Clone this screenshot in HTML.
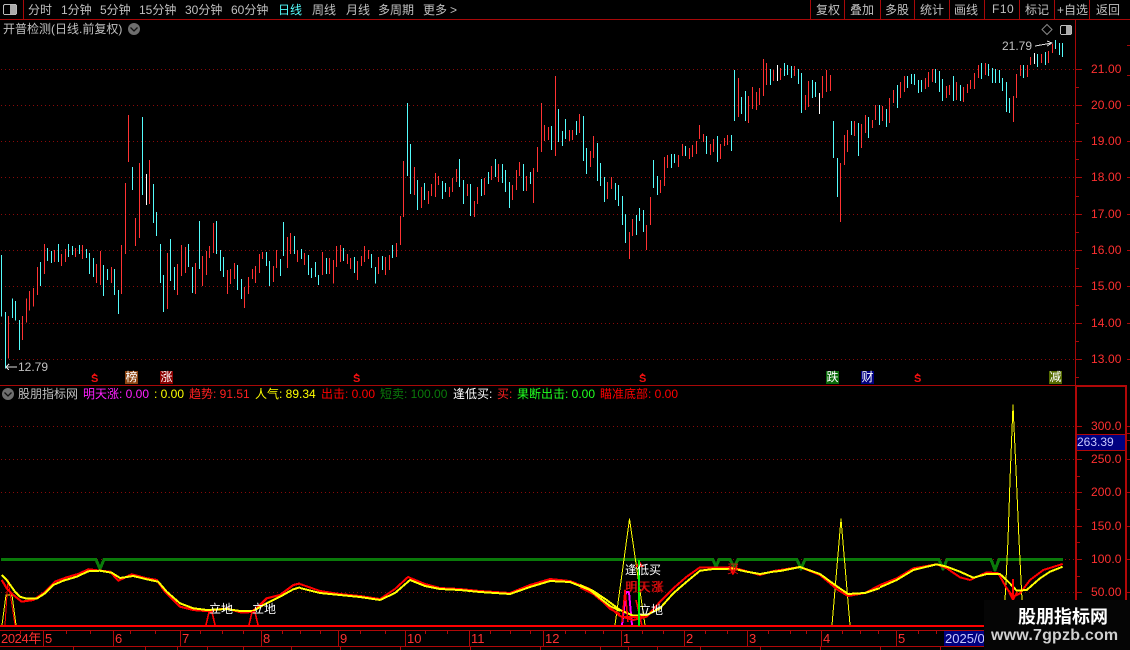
<!DOCTYPE html>
<html><head><meta charset="utf-8"><style>
html,body{margin:0;padding:0;background:#000;width:1130px;height:650px;overflow:hidden}
#p{position:relative;width:1130px;height:650px;background:#000;overflow:hidden;font:12px/14px "Liberation Sans","WenQuanYi Zen Hei","Noto Sans CJK SC",sans-serif;color:#c0c0c0}
.t{position:absolute;white-space:pre;line-height:14px;height:14px}
.y{color:#ff3030;letter-spacing:.1px}
.m{color:#ff3030;font-size:13px}
.s{color:#f01010;font-weight:bold;font-size:11px}
svg{position:absolute;left:0;top:0}
.bx{position:absolute;width:13px;height:13px;color:#fff;font-size:12px;line-height:13px;text-align:center;top:371px}
</style></head><body><div id="p">
<svg width="1130" height="650" shape-rendering="crispEdges" fill="none">
<g stroke="#8a0a0a" stroke-dasharray="1 3">
<path d="M1 69.5H1075M1 105.5H1075M1 141.5H1075M1 177.5H1075M1 214.5H1075M1 250.5H1075M1 286.5H1075M1 323.5H1075M1 359.5H1075M1 426.5H1075M1 459.5H1075M1 492.5H1075M1 526.5H1075M1 559.5H1075M1 592.5H1075"/>
</g>
<g stroke-width="3" transform="translate(.17,100) scale(.33333)">
<path stroke="#54fcfc" d="M4 465V650M16 636V805M37 595V654M46 603V662M58 660V750M121 486V558M142 444V483M154 453V489M175 432V486M205 432V471M217 438V465M238 435V462M259 447V474M268 459V522M280 474V531M310 495V588M322 507V540M343 507V585M355 570V642M397 201V270M427 51V285M460 252V369M469 336V408M481 432V549M490 525V636M511 417V543M523 501V570M565 432V501M577 501V579M598 363V507M649 363V462M661 450V513M670 471V531M712 495V570M724 537V597M799 456V498M808 483V558M841 477V528M850 366V468M883 408V462"/>
<path stroke="#ff3232" d="M25 648V775M67 648V720M79 595V668M88 573V632M100 564V620M112 501V585M133 432V522M163 450V486M184 462V498M196 447V486M226 444V471M247 435V477M289 492V549M301 453V555M334 501V549M364 435V582M376 249V462M385 45V186M406 354V438M418 189V414M448 180V312M502 459V627M532 492V585M544 435V528M556 441V519M586 489V582M607 468V558M619 453V525M628 438V474M640 369V459M682 510V582M691 507V552M703 489V537M733 561V624M745 531V582M757 507V537M766 498V549M778 462V519M787 456V477M820 498V546M829 450V504M862 411V504M871 399V462M892 450V486"/>
<path stroke="#fff" d="M439 222V315"/>
</g>
<g stroke-width="3" transform="translate(300.17,80) scale(.33333)">
<path stroke="#54fcfc" d="M4 507V537M25 525V585M34 564V594M46 546V591M55 585V615M79 534V582M130 504V543M163 531V579M214 522V564M226 561V610M247 528V570M277 495V534M322 69V288M331 192V342M352 300V390M373 309V360M427 303V357M436 309V336M478 237V321M490 300V372M511 312V408M544 297V348M565 276V312M586 237V291M607 252V309M616 270V336M628 306V384M670 252V333M691 276V312M754 138V210M775 87V186M787 153V198M796 117V177M829 123V165M850 108V243M859 204V282M892 189V303"/>
<path stroke="#ff3232" d="M13 519V555M67 516V585M88 534V582M100 540V610M109 498V561M121 495V546M142 522V552M151 534V567M172 543V600M184 528V558M193 498V546M205 510V537M235 531V582M256 531V585M268 525V570M289 489V531M301 408V495M310 243V411M343 261V345M364 321V384M385 333V372M394 312V348M406 279V351M415 288V315M448 321V351M457 294V336M469 267V306M502 312V348M523 363V411M532 321V372M553 294V345M574 258V300M595 252V306M637 315V360M649 270V330M658 246V288M679 288V333M700 264V369M712 201V276M724 69V216M733 135V183M745 141V180M766 -12V228M808 150V183M817 150V180M838 102V159M871 213V261M880 168V234"/>
</g>
<g stroke-width="3" transform="translate(600.17,50) scale(.33333)">
<path stroke="#54fcfc" d="M1 339V408M13 381V456M46 399V450M55 405V468M67 438V525M76 492V579M109 495V555M118 474V513M130 480V546M160 330V414M172 378V435M214 312V354M223 312V339M256 288V318M319 258V312M352 258V336M394 255V303M403 60V213M424 141V192M436 123V213M511 57V105M553 39V78M562 45V75M574 48V84M595 57V102M604 69V189M637 90V144M646 96V141M700 213V324M712 324V441M754 213V255M775 219V318M805 201V264M838 165V225M859 177V231M892 105V174"/>
<path stroke="#ff3232" d="M22 396V447M34 381V417M88 546V627M97 507V558M139 525V600M151 441V525M181 390V429M193 321V408M202 315V354M235 315V351M247 282V318M268 294V327M277 285V321M289 273V312M298 225V267M310 252V276M331 282V315M340 267V306M361 282V327M373 264V288M382 255V285M415 84V201M445 138V219M457 111V177M469 126V180M478 114V165M490 27V138M499 39V105M520 60V93M541 54V90M583 48V78M616 135V180M625 93V171M667 78V144M679 60V126M691 75V123M721 339V516M733 255V345M742 240V306M763 213V258M784 222V294M796 195V249M817 210V234M826 165V210M847 168V213M868 144V219M880 120V159"/>
<path stroke="#fff" d="M532 45V93M658 129V192"/>
</g>
<g stroke-width="3" transform="translate(860.17,30) scale(.33333)">
<path stroke="#54fcfc" d="M142 138V174M154 132V162M163 132V165M175 150V189M184 150V186M226 117V159M238 123V186M247 147V213M280 138V213M301 165V213M364 99V147M385 102V138M397 114V159M406 117V159M418 120V159M427 144V183M439 156V246M448 204V249M490 105V144M532 72V111M556 66V105M586 30V57M598 39V75M607 39V81"/>
<path stroke="#ff3232" d="M121 156V204M133 138V186M196 144V177M205 126V171M217 117V156M259 168V204M268 165V195M289 156V210M310 171V216M322 162V189M331 150V177M343 129V177M355 105V144M376 99V135M460 198V276M469 132V204M481 105V138M502 105V141M511 81V105M544 72V99M565 63V99M577 42V69"/>
<path stroke="#fff" d="M523 69V102"/>
</g>
<!-- frame -->
<g stroke="#a80808">
<path d="M0 19.5H1130M23.5 0V19M810.5 0V19M844.5 0V19M880.5 0V19M914.5 0V19M949.5 0V19M984.5 0V19M1019.5 0V19M1054.5 0V19M1089.5 0V19"/>
<path d="M0 385.5H1075"/>
<path d="M1075.5 19V385"/>
<path d="M1076 69.5H1082M1076 87.5H1079M1076 105.5H1082M1076 123.5H1079M1076 141.5H1082M1076 159.5H1079M1076 177.5H1082M1076 196.5H1079M1076 214.5H1082M1076 232.5H1079M1076 250.5H1082M1076 268.5H1079M1076 286.5H1082M1076 305.5H1079M1076 323.5H1082M1076 341.5H1079M1076 359.5H1082M1076 377.5H1079"/>
<path d="M1127 45.5H1130M1127 75.5H1130M1127 105.5H1130M1127 141.5H1130M1127 177.5H1130M1127 214.5H1130M1127 250.5H1130M1127 286.5H1130M1127 323.5H1130M1127 359.5H1130M1127 426.5H1130M1127 433.5H1130M1127 440.5H1130M1127 459.5H1130M1127 492.5H1130M1127 526.5H1130M1127 559.5H1130M1127 592.5H1130"/>
<path d="M1077 426.5H1082M1077 443.5H1080M1077 459.5H1082M1077 476.5H1080M1077 492.5H1082M1077 509.5H1080M1077 526.5H1082M1077 542.5H1080M1077 559.5H1082M1077 576.5H1080M1077 592.5H1082M1077 609.5H1080"/>
</g>
<rect x="1075" y="385" width="51" height="2" fill="#b00808"/>
<rect x="1075" y="385" width="2" height="265" fill="#b00808"/>
<rect x="1125" y="385" width="2" height="265" fill="#b00808"/>
<rect x="1077" y="435" width="48" height="15" fill="#000080"/>
<path d="M1077 434.5H1125M1077 450.5H1125" stroke="#b00808"/>
<!-- time axis -->
<g stroke="#b00808">
<path d="M0 630.5H1075M0 646.5H1075M43.5 630V646M113.5 630V646M180.5 630V646M261.5 630V646M338.5 630V646M405.5 630V646M469.5 630V646M543.5 630V646M621.5 630V646M684.5 630V646M747.5 630V646M821.5 630V646M896.5 630V646"/>
<path d="M20.5 630V634M66.5 630V634M90.5 630V634M130.5 630V634M155.5 630V634M200.5 630V634M222.5 630V634M243.5 630V634M282.5 630V634M300.5 630V634M320.5 630V634M360.5 630V634M385.5 630V634M425.5 630V634M447.5 630V634M490.5 630V634M510.5 630V634M530.5 630V634M565.5 630V634M585.5 630V634M603.5 630V634M642.5 630V634M663.5 630V634M705.5 630V634M727.5 630V634M768.5 630V634M790.5 630V634M806.5 630V634M842.5 630V634M860.5 630V634M878.5 630V634M918.5 630V634M936.5 630V634"/>
<path d="M73.5 647V650M145.5 647V650M177.5 647V650M207.5 647V650M243.5 647V650M291.5 647V650M340.5 647V650M400.5 647V650M470.5 647V650M540.5 647V650M600.5 647V650M628.5 647V650M657.5 647V650M700.5 647V650M760.5 647V650M820.5 647V650M880.5 647V650M940.5 647V650"/>
</g>
<rect x="944" y="631" width="41" height="15" fill="#000080"/>
<!-- indicators -->
<g fill="none" stroke-linejoin="round">
<path stroke="#0a7a0a" stroke-width="3" d="M1 559.5H96L100 569L104 559.5H713L716 567L719 559.5H730L734 567L738 559.5H797L801 569L805 559.5H939L943 569L947 559.5H991L995 570L999 559.5H1063"/>
<g stroke="#ffff00" stroke-width="1">
<path d="M2 625L6 595H12L16 625"/>
<path d="M615 625L629.5 519L645 625"/>
<path d="M832 625L841 519L850 625"/>
<path d="M1005 600L1008 540L1010 480L1013 405L1016 470L1019 540L1022 600"/>
</g>
<path stroke="#ff0000" stroke-width="1" d="M5 625L8 580L15 625"/>
<path stroke="#ff00ff" stroke-width="2" d="M622 625L626 592H629L632 625"/>
<g stroke="#ff0000" transform="translate(0,550) scale(.33333)">
<path stroke-width="6.500" d="M5 90L20 115L40 135L65 155L100 150L130 130L165 95L200 82L235 72L265 58L300 62L330 65L355 92L395 73L440 85L470 90L495 125L540 170L580 180L620 183L680 175L725 188L755 186L780 165L800 145L840 135L880 105L900 100"/>
</g>
<path stroke="#ff0000" stroke-width="2" d="M300 584L320 591L340 594L360 596L380 599L395 589L408 577L425 584L440 588L460 589L480 591L510 593L530 585L550 579L570 581L590 589L610 609L620 614"/>
<path stroke="#ff0000" stroke-width="2" d="M580 587.3L593.3 594L606.7 605L620 616L633.3 620L646.7 616.7L660 601.7L673.3 588.3L686.7 576.7L700 567.3L713.3 567.3L726.7 567.3L740 569.3L760 575L773.3 571L780 570L800 567L820 575L838 590L848 596L865 593L880 585"/>
<path stroke="#ff0000" stroke-width="2" d="M880 585L896.7 578.3L913.3 568.3L936.7 564.3L946.7 568.3L960 577.3L970 580L986.7 572.3L998.3 573.3L1006.7 588.3L1013.3 596.7L1020 593.3L1030 580L1043.3 570L1062.7 564"/>
<g stroke="#ffff00" stroke-width="2">
<path d="M1.7 575L6.7 580L15 591.7L20 596.7L26.7 598.7L36.7 598.7L45 593.3L53.3 585L63.3 580.7L76.7 576.7L88.3 571.3L100 570.7L111.7 572.7L120 578L133.3 576L146.7 579.3L158.3 581.7L166.7 591.7L180 603.3L193.3 608.3L206.7 610L226.7 609L240 611L253.3 611L263.3 605L280 596.7L293.3 589.3L300 587.3"/>
<path d="M300 588L320 593L340 595L360 597L380 600L395 593L410 580L425 586L440 589L460 590L480 592L510 594L530 587L550 581L570 582L590 590L610 606L620 611"/>
<path d="M580 585L593.3 591L606.7 600L620 610L633.3 615.7L646.7 615L660 608.3L673.3 593.3L686.7 581.7L700 570.7L713.3 569L733.3 568.7L746.7 571.7L760 574L773.3 571.7L780 571L800 567L820 574L835 585L848 594L865 593L880 588"/>
<path d="M880 587.3L896.7 580L913.3 570L936.7 564.3L946.7 566.7L960 571.7L973.3 577.7L986.7 574L1000 574L1008.3 581.7L1016.7 590.7L1026.7 590L1040 578.3L1050 571.7L1062.7 566.7"/>
</g>
<g stroke="#ff0000" stroke-width="1.600">
<path d="M206 625L209 612H212L215 625"/>
<path d="M249 625L252 612H255L258 625"/>
<path d="M622 622L625 590L628 622M622 617H644M636 600L642 626"/>
<path d="M1013 579V600M1009 592L1013 600L1017 592"/>
<path d="M729 566L733 574L737 566"/>
</g>
<path d="M635 567H644L639.500 561Z" fill="#ff0000"/>
<g stroke="#ddd" stroke-width="1" fill="none">
<path d="M1035 46L1052 43L1047 41M1052 43L1047 46"/>
<path d="M6 367H17M9 364L6 367L9 370"/>
</g>
<rect x="5" y="350" width="1" height="15" fill="#54fcfc"/>
</g>
<rect x="0" y="625" width="1075" height="2" fill="#ff0000"/>
<rect x="638" y="560" width="2" height="66" fill="#00f000"/>
<!-- icons -->
<rect x="3.500" y="4.500" width="13" height="10" rx="1.500" fill="none" stroke="#bbb"/>
<rect x="10" y="5" width="6" height="9" fill="#aaa"/>
<rect x="1060.500" y="25.500" width="11" height="9" rx="1.500" fill="none" stroke="#bbb"/>
<rect x="1066" y="26" width="5" height="8" fill="#aaa"/>
<path d="M1047 24.500L1052 29.500L1047 34.500L1042 29.500Z" fill="none" stroke="#888" shape-rendering="auto"/>
<g shape-rendering="auto">
<circle cx="134" cy="29" r="6" fill="#6e6e6e"/><path d="M130.500 27.500L134 31L137.500 27.500" stroke="#111" stroke-width="1.300" fill="none"/>
<circle cx="8" cy="394" r="6" fill="#6e6e6e"/><path d="M4.500 392.500L8 396L11.500 392.500" stroke="#111" stroke-width="1.300" fill="none"/>
<path d="M92 376H97L94.500 373Z" fill="#f01010"/><path d="M354 376H359L356.500 373Z" fill="#f01010"/><path d="M640 376H645L642.500 373Z" fill="#f01010"/><path d="M915 376H920L917.500 373Z" fill="#f01010"/>
</g>
</svg>
<span class="t" style="left:28px;top:3px">分时</span><span class="t" style="left:61px;top:3px">1分钟</span><span class="t" style="left:100px;top:3px">5分钟</span><span class="t" style="left:139px;top:3px">15分钟</span><span class="t" style="left:185px;top:3px">30分钟</span><span class="t" style="left:231px;top:3px">60分钟</span><span class="t" style="left:278px;top:3px;color:#54fcfc">日线</span><span class="t" style="left:312px;top:3px">周线</span><span class="t" style="left:346px;top:3px">月线</span><span class="t" style="left:378px;top:3px">多周期</span><span class="t" style="left:423px;top:3px">更多</span><span class="t" style="left:450px;top:3px">&gt;</span>
<span class="t" style="left:816px;top:3px">复权</span><span class="t" style="left:850px;top:3px">叠加</span><span class="t" style="left:885px;top:3px">多股</span><span class="t" style="left:920px;top:3px">统计</span><span class="t" style="left:954px;top:3px">画线</span><span class="t" style="left:992px;top:2px;letter-spacing:.5px">F10</span><span class="t" style="left:1025px;top:3px">标记</span><span class="t" style="left:1057px;top:3px">+自选</span><span class="t" style="left:1096px;top:3px">返回</span>
<span class="t" style="left:3px;top:22px">开普检测(日线.前复权)</span>
<span class="t" style="left:1002px;top:39px">21.79</span><span class="t" style="left:18px;top:360px">12.79</span>
<span class="t y" style="left:1091px;top:62px">21.00</span><span class="t y" style="left:1091px;top:98px">20.00</span><span class="t y" style="left:1091px;top:134px">19.00</span><span class="t y" style="left:1091px;top:170px">18.00</span><span class="t y" style="left:1091px;top:207px">17.00</span><span class="t y" style="left:1091px;top:243px">16.00</span><span class="t y" style="left:1091px;top:279px">15.00</span><span class="t y" style="left:1091px;top:316px">14.00</span><span class="t y" style="left:1091px;top:352px">13.00</span>
<span class="t y" style="left:1091px;top:419px">300.0</span><span class="t y" style="left:1091px;top:452px">250.0</span><span class="t y" style="left:1091px;top:485px">200.0</span><span class="t y" style="left:1091px;top:519px">150.0</span><span class="t y" style="left:1091px;top:552px">100.0</span><span class="t y" style="left:1091px;top:585px">50.00</span>
<span class="t" style="left:1077px;top:435px;color:#c8c8ff">263.39</span>
<span class="t s" style="left:91px;top:372px">S</span><span class="t s" style="left:353px;top:372px">S</span><span class="t s" style="left:639px;top:372px">S</span><span class="t s" style="left:914px;top:372px">S</span>
<span class="bx" style="left:125px;background:#8b4513">榜</span><span class="bx" style="left:160px;background:#8b0000">涨</span><span class="bx" style="left:826px;background:#0a6a0a">跌</span><span class="bx" style="left:861px;background:#000080">财</span><span class="bx" style="left:1049px;background:#556b00">减</span>
<span class="t" style="left:18px;top:387px">股朋指标网</span><span class="t" style="left:83px;top:387px;color:#ff20ff">明天涨: 0.00</span><span class="t" style="left:154px;top:387px;color:#ffff00">: 0.00</span><span class="t" style="left:189px;top:387px;color:#ff2020">趋势: 91.51</span><span class="t" style="left:255px;top:387px;color:#ffff00">人气: 89.34</span><span class="t" style="left:321px;top:387px;color:#ff0000">出击: 0.00</span><span class="t" style="left:380px;top:387px;color:#0a7a0a">短卖: 100.00</span><span class="t" style="left:453px;top:387px;color:#fff">逢低买:</span><span class="t" style="left:497px;top:387px;color:#ff2020">买:</span><span class="t" style="left:517px;top:387px;color:#20ff20">果断出击: 0.00</span><span class="t" style="left:600px;top:387px;color:#ff0000">瞄准底部: 0.00</span>
<span class="t" style="left:209px;top:602px;color:#fff">立地</span><span class="t" style="left:252px;top:602px;color:#fff">立地</span><span class="t" style="left:639px;top:603px;color:#fff">立地</span><span class="t" style="left:625px;top:563px;color:#fff">逢低买</span><span class="t" style="left:625px;top:580px;color:#e01010;letter-spacing:1px;text-shadow:1px 0 #a00">明天涨</span><span class="t" style="left:727px;top:562px;color:#e01010">买</span>
<span class="t m" style="left:1px;top:632px;letter-spacing:-.4px">2024年</span><span class="t m" style="left:45px;top:632px">5</span><span class="t m" style="left:115px;top:632px">6</span><span class="t m" style="left:182px;top:632px">7</span><span class="t m" style="left:263px;top:632px">8</span><span class="t m" style="left:340px;top:632px">9</span><span class="t m" style="left:407px;top:632px">10</span><span class="t m" style="left:471px;top:632px">11</span><span class="t m" style="left:545px;top:632px">12</span><span class="t m" style="left:623px;top:632px">1</span><span class="t m" style="left:686px;top:632px">2</span><span class="t m" style="left:749px;top:632px">3</span><span class="t m" style="left:823px;top:632px">4</span><span class="t m" style="left:898px;top:632px">5</span><span class="t m" style="left:945px;top:632px;color:#c8c8ff;width:39px;overflow:hidden">2025/09</span>
<div style="position:absolute;left:984px;top:600px;width:146px;height:50px;background:#050505"></div>
<span class="t" style="left:1018px;top:604px;height:24px;line-height:24px;font-size:18px;font-weight:bold;color:#fff;font-family:'Noto Sans CJK SC',sans-serif">股朋指标网</span>
<span class="t" style="left:991px;top:626px;height:20px;line-height:20px;font-size:16px;font-weight:bold;color:#d0d0d0;letter-spacing:.2px">www.7gpzb.com</span>
</div></body></html>
